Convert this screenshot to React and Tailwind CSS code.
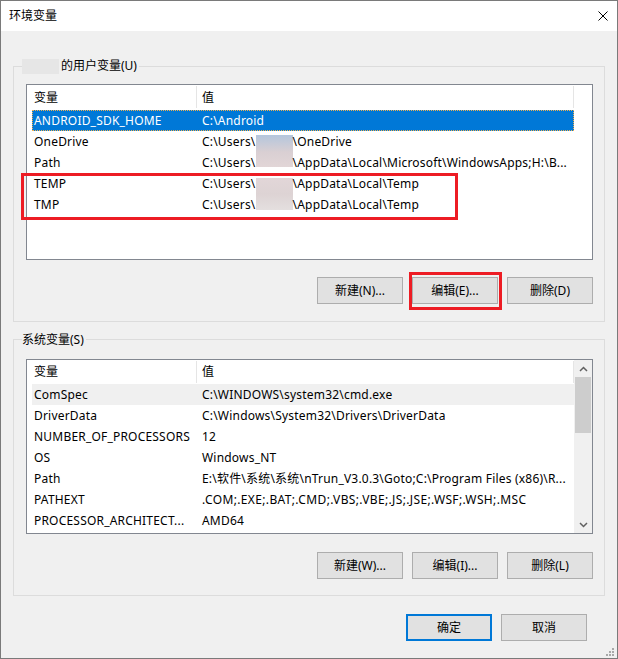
import React from "react";

function Patch({ cls }) {
  return <span className={`inline-block w-[37px] shrink-0 ${cls}`} />;
}

function Row({ name, value, selected, soft, wide }) {
  const bg = selected
    ? "bg-[#0078d7] text-white outline-1 outline-dotted outline-[#f0b050] -outline-offset-1"
    : soft
    ? "bg-[#f0f0f0] text-black"
    : "text-black";
  return (
    <div className={`flex h-[21px] items-center tracking-[0.2px] ${bg}`}>
      <div className="w-[164px] pl-[2px] whitespace-nowrap overflow-hidden">{name}</div>
      <div
        className={`flex-1 h-full pl-[6px] whitespace-nowrap overflow-hidden flex items-center ${
          wide ? "tracking-[0.36px]" : ""
        }`}
      >
        {value}
      </div>
    </div>
  );
}

function Header({ h }) {
  return (
    <div className={`flex ${h} items-center`}>
      <div className="w-[164px] pl-[2px]">变量</div>
      <div className="w-px h-[22px] self-start mt-[1px] bg-[#e5e5e5]" />
      <div className="flex-1 pl-[5px]">值</div>
      <div className="w-px h-[22px] self-start mt-[1px] bg-[#e5e5e5]" />
    </div>
  );
}

function Btn({ children, primary }) {
  return (
    <button
      className={`w-[86px] h-[27px] bg-[#e1e1e1] text-[12px] text-black flex items-center justify-center ${
        primary ? "border-2 border-[#0078d7]" : "border border-[#adadad]"
      }`}
    >
      {children}
    </button>
  );
}

function Chevron({ up }) {
  return (
    <svg width="9" height="6" viewBox="0 0 9 6">
      <path
        d={up ? "M1 5 L4.5 1.5 L8 5" : "M1 1 L4.5 4.5 L8 1"}
        fill="none"
        stroke="#606060"
        strokeWidth="1.5"
      />
    </svg>
  );
}

export default function App() {
  return (
    <div className="relative w-[618px] h-[659px] border border-[#7a7a7a] bg-[#f0f0f0] flex flex-col text-[12px] text-black font-['Noto_Sans','Noto_Sans_CJK_SC',sans-serif] overflow-hidden">
      {/* title bar */}
      <div className="h-[30px] bg-white flex items-center justify-between pl-[8px] pr-[9px] shrink-0">
        <span>环境变量</span>
        <svg width="10" height="10" viewBox="0 0 10 10">
          <path d="M0.5 0.5 L9.5 9.5 M9.5 0.5 L0.5 9.5" stroke="#000" strokeWidth="1" />
        </svg>
      </div>

      {/* user group */}
      <div className="relative ml-[12px] mt-[35px] w-[592px] h-[256px] border border-[#dcdcdc] pl-[12px] pt-[17px] shrink-0">
        <div className="absolute left-[8px] -top-[9px] h-[16px] bg-[#f0f0f0] flex items-center pr-[2px]">
          <span className="inline-block w-[37px] h-[15px] bg-[#e6e6e6]" />
          <span className="pl-[2px]">的用户变量(U)</span>
        </div>
        <div className="w-[567px] h-[176px] border border-[#828790] bg-white flex">
          <div className="w-[5px]" />
          <div className="w-[542px] flex flex-col">
            <Header h="h-[25px]" />
            <Row selected name="ANDROID_SDK_HOME" value="C:\Android" />
            <Row
              name="OneDrive"
              value={
                <>
                  <span>C:\Users\</span>
                  <Patch cls="h-[17px] self-end bg-linear-to-b from-[#b4c6dc] to-[#d9cfd3]" />
                  <span>\OneDrive</span>
                </>
              }
            />
            <Row
              name="Path"
              value={
                <>
                  <span>C:\Users\</span>
                  <Patch cls="h-[15px] self-start bg-linear-to-b from-[#d9cfd3] to-[#e2d6d7]" />
                  <span>\AppData\Local\Microsoft\WindowsApps;H:\B...</span>
                </>
              }
            />
            <Row
              name="TEMP"
              value={
                <>
                  <span>C:\Users\</span>
                  <Patch cls="h-[16px] self-end bg-linear-to-b from-[#e2d6d8] to-[#ddd3d4]" />
                  <span>\AppData\Local\Temp</span>
                </>
              }
            />
            <Row
              name="TMP"
              value={
                <>
                  <span>C:\Users\</span>
                  <Patch cls="h-[16px] self-start bg-linear-to-b from-[#ddd3d4] to-[#e4dfdf]" />
                  <span>\AppData\Local\Temp</span>
                </>
              }
            />
          </div>
          <div className="flex-1" />
        </div>
        <div className="mt-[17px] w-[567px] flex justify-end gap-[9px]">
          <Btn>新建(N)...</Btn>
          <Btn>编辑(E)...</Btn>
          <Btn>删除(D)</Btn>
        </div>
      </div>

      {/* system group */}
      <div className="relative ml-[12px] mt-[17px] w-[592px] h-[257px] border border-[#dcdcdc] pl-[12px] pt-[19px] shrink-0">
        <div className="absolute left-[8px] -top-[8px] h-[16px] bg-[#f0f0f0] flex items-center pr-[2px]">
          <span>系统变量(S)</span>
        </div>
        <div className="w-[567px] h-[175px] border border-[#828790] bg-white flex">
          <div className="w-[5px]" />
          <div className="w-[542px] flex flex-col">
            <Header h="h-[24px]" />
            <Row soft name="ComSpec" value="C:\WINDOWS\system32\cmd.exe" />
            <Row name="DriverData" value="C:\Windows\System32\Drivers\DriverData" />
            <Row name="NUMBER_OF_PROCESSORS" value="12" />
            <Row name="OS" value="Windows_NT" />
            <Row name="Path" value="E:\软件\系统\系统\nTrun_V3.0.3\Goto;C:\Program Files (x86)\R..." />
            <Row wide name="PATHEXT" value=".COM;.EXE;.BAT;.CMD;.VBS;.VBE;.JS;.JSE;.WSF;.WSH;.MSC" />
            <Row name="PROCESSOR_ARCHITECT..." value="AMD64" />
          </div>
          <div className="flex-1 bg-[#f0f0f0] flex flex-col">
            <div className="h-[17px] flex items-center justify-center">
              <Chevron up />
            </div>
            <div className="h-[56px] mx-[1px] bg-[#cdcdcd]" />
            <div className="flex-1" />
            <div className="h-[17px] flex items-center justify-center">
              <Chevron />
            </div>
          </div>
        </div>
        <div className="mt-[18px] w-[567px] flex justify-end gap-[9px]">
          <Btn>新建(W)...</Btn>
          <Btn>编辑(I)...</Btn>
          <Btn>删除(L)</Btn>
        </div>
      </div>

      {/* dialog buttons */}
      <div className="mt-[18px] flex justify-end gap-[9px] pr-[30px] shrink-0">
        <Btn primary>确定</Btn>
        <Btn>取消</Btn>
      </div>

      {/* resize grip */}
      <svg className="absolute right-[3px] bottom-[2px]" width="8" height="8" viewBox="0 0 8 8">
        <rect x="6" y="0" width="2" height="2" fill="#a8a8a8" />
        <rect x="3" y="3" width="2" height="2" fill="#a8a8a8" />
        <rect x="6" y="3" width="2" height="2" fill="#a8a8a8" />
        <rect x="0" y="6" width="2" height="2" fill="#a8a8a8" />
        <rect x="3" y="6" width="2" height="2" fill="#a8a8a8" />
        <rect x="6" y="6" width="2" height="2" fill="#a8a8a8" />
      </svg>

      {/* red annotation boxes */}
      <div className="absolute left-[20px] top-[172px] w-[437px] h-[47px] border-[3px] border-[#ed1c24] pointer-events-none" />
      <div className="absolute left-[408px] top-[271px] w-[93px] h-[38px] border-[3px] border-[#ed1c24] pointer-events-none" />
    </div>
  );
}
